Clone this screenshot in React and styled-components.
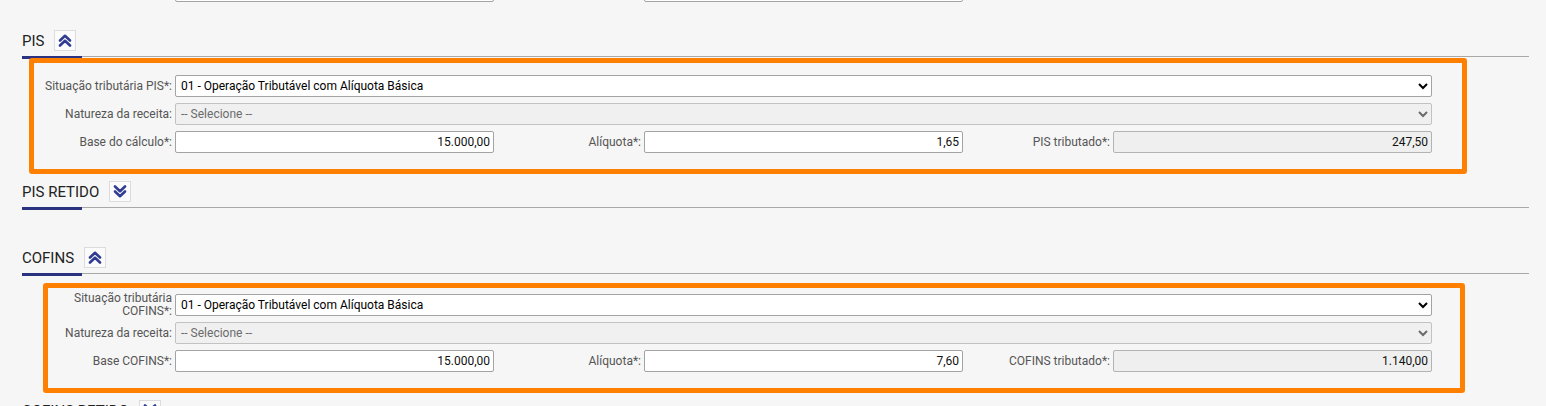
import React from 'react';
import styled, { createGlobalStyle } from 'styled-components';

const GlobalStyle = createGlobalStyle`
  html, body { margin: 0; padding: 0; background: #f6f6f6; }
  body { font-family: Roboto, "Liberation Sans", Arial, sans-serif; overflow: hidden; }
`;

const Page = styled.div`
  box-sizing: border-box;
  width: 1546px;
  height: 406px;
  overflow: hidden;
  padding: 0 17px 0 22px;
`;

const Grid = styled.div`
  display: grid;
  grid-template-columns: 153px 319px 150px 319px 150px 319px;
  grid-auto-rows: 22px;
  row-gap: 6px;
  align-items: center;
  margin-top: ${(p) => p.$offset || 0}px;
`;

const Label = styled.label`
  font-size: 12px;
  line-height: 13px;
  color: #555;
  text-align: right;
  padding-right: 3px;
`;

const Input = styled.input`
  box-sizing: border-box;
  width: 100%;
  height: 22px;
  margin: 0;
  padding: 0 3px;
  border: 1px solid ${(p) => (p.readOnly ? '#b3b3b3' : '#a3a3a3')};
  border-radius: 2px;
  background: ${(p) => (p.readOnly ? '#efefef' : '#fff')};
  font-family: Roboto, "Liberation Sans", Arial, sans-serif;
  font-size: 12px;
  color: #111;
  text-align: right;
  outline: none;
`;

const Select = styled.select`
  grid-column: 2 / -1;
  box-sizing: border-box;
  width: 100%;
  height: 22px;
  margin: 0;
  padding: 0 1px;
  border: 1px solid ${(p) => (p.disabled ? '#c2c2c2' : '#a3a3a3')};
  border-radius: 2px;
  background-color: ${(p) => (p.disabled ? '#f0f0f0' : '#fff')};
  font-family: Roboto, "Liberation Sans", Arial, sans-serif;
  font-size: 12px;
  color: ${(p) => (p.disabled ? '#6b6b6b' : '#000')};
  opacity: 1;
`;

const Header = styled.div`
  position: relative;
  display: flex;
  align-items: center;
  gap: 10px;
  margin-top: ${(p) => p.$gap}px;
  padding-bottom: 5px;
  border-bottom: 1px solid #a8a8a8;
  &::after {
    content: '';
    position: absolute;
    left: 0;
    bottom: -3px;
    width: 60px;
    height: 3px;
    background: #2b3380;
  }
`;

const Title = styled.span`
  font-size: 15px;
  line-height: 18px;
  color: #222;
  text-transform: uppercase;
`;

const ToggleButton = styled.button`
  box-sizing: border-box;
  width: 22px;
  height: 21px;
  padding: 0;
  border: 1px solid #dcdcdc;
  background: #fbfbfb;
  display: flex;
  align-items: center;
  justify-content: center;
  cursor: pointer;
`;

const Body = styled.div`
  position: relative;
  padding-top: ${(p) => p.$pad || 18}px;
`;

const Highlight = styled.div`
  position: absolute;
  box-sizing: border-box;
  top: ${(p) => p.$top}px;
  left: ${(p) => p.$left}px;
  width: ${(p) => p.$width}px;
  height: ${(p) => p.$height}px;
  border: 5px solid #ff8000;
  border-radius: 3px;
  pointer-events: none;
`;

function Chevrons({ up }) {
  return (
    <svg width="14" height="13" viewBox="0 0 14 13" fill="none">
      <g
        stroke="#2f3c92"
        strokeWidth="2.6"
        strokeLinecap="round"
        strokeLinejoin="round"
        transform={up ? undefined : 'rotate(180 7 6.5)'}
      >
        <path d="M2 6.5 L7 1.8 L12 6.5" />
        <path d="M2 11.5 L7 6.8 L12 11.5" />
      </g>
    </svg>
  );
}

function SectionHeader({ title, up, gap }) {
  return (
    <Header $gap={gap}>
      <Title>{title}</Title>
      <ToggleButton type="button" aria-label={up ? 'Recolher' : 'Expandir'}>
        <Chevrons up={up} />
      </ToggleButton>
    </Header>
  );
}

function TaxGrid({ situacaoLabel, baseLabel, base, aliquota, totalLabel, total }) {
  return (
    <Grid>
      <Label>{situacaoLabel}</Label>
      <Select defaultValue="01">
        <option value="01">01 - Operação Tributável com Alíquota Básica</option>
      </Select>
      <Label>Natureza da receita:</Label>
      <Select disabled defaultValue="">
        <option value="">-- Selecione --</option>
      </Select>
      <Label>{baseLabel}</Label>
      <Input defaultValue={base} />
      <Label>Alíquota*:</Label>
      <Input defaultValue={aliquota} />
      <Label>{totalLabel}</Label>
      <Input readOnly value={total} />
    </Grid>
  );
}

export default function App() {
  return (
    <>
      <GlobalStyle />
      <Page>
        <Grid $offset={-20}>
          <span />
          <Input defaultValue="" />
          <span />
          <Input defaultValue="" />
        </Grid>

        <SectionHeader title="PIS" up gap={28} />
        <Body>
          <Highlight $top={1} $left={7} $width={1438} $height={116} />
          <TaxGrid
            situacaoLabel="Situação tributária PIS*:"
            baseLabel="Base do cálculo*:"
            base="15.000,00"
            aliquota="1,65"
            totalLabel="PIS tributado*:"
            total="247,50"
          />
        </Body>

        <SectionHeader title="PIS RETIDO" gap={28} />

        <SectionHeader title="COFINS" up gap={39} />
        <Body $pad={20}>
          <Highlight $top={9} $left={21} $width={1422} $height={110} />
          <TaxGrid
            situacaoLabel="Situação tributária COFINS*:"
            baseLabel="Base COFINS*:"
            base="15.000,00"
            aliquota="7,60"
            totalLabel="COFINS tributado*:"
            total="1.140,00"
          />
        </Body>

        <SectionHeader title="COFINS RETIDO" gap={28} />
      </Page>
    </>
  );
}
